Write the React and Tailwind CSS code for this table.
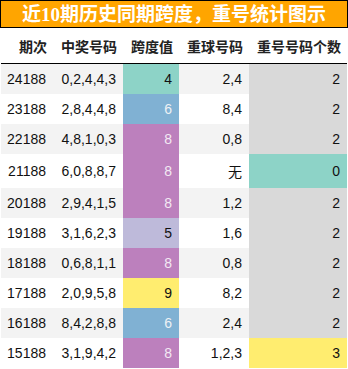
import React from 'react';

const C = {
  teal: 'bg-[#8dd3c7] text-[#111]',
  blue: 'bg-[#80b1d3] text-[#eef2f5]',
  purple: 'bg-[#bc80bd] text-[#f3e9f3]',
  lav: 'bg-[#bebada] text-[#111]',
  yellow: 'bg-[#ffed6f] text-[#111]',
  gray: 'bg-[#d9d9d9] text-[#111]',
};

const rows = [
  ['24188', '0,2,4,4,3', '4', 'teal', '2,4', '2', 'gray'],
  ['23188', '2,8,4,4,8', '6', 'blue', '8,4', '2', 'gray'],
  ['22188', '4,8,1,0,3', '8', 'purple', '0,8', '2', 'gray'],
  ['21188', '6,0,8,8,7', '8', 'purple', '无', '0', 'teal'],
  ['20188', '2,9,4,1,5', '8', 'purple', '1,2', '2', 'gray'],
  ['19188', '3,1,6,2,3', '5', 'lav', '1,6', '2', 'gray'],
  ['18188', '0,6,8,1,1', '8', 'purple', '0,8', '2', 'gray'],
  ['17188', '2,0,9,5,8', '9', 'yellow', '8,2', '2', 'gray'],
  ['16188', '8,4,2,8,8', '6', 'blue', '2,4', '2', 'gray'],
  ['15188', '3,1,9,4,2', '8', 'purple', '1,2,3', '3', 'yellow'],
];

const headers = ['期次', '中奖号码', '跨度值', '重球号码', '重号号码个数'];
const widths = ['w-[52px]', 'w-[70px]', 'w-[56px]', 'w-[70px]', 'w-[98px]'];

export default function App() {
  return (
    <div className="w-[348px] bg-white font-['Liberation_Sans','Noto_Sans_CJK_SC',sans-serif] text-[14px] leading-[normal] text-[#111]">
      {/* title */}
      <div className="h-[28px] border border-black bg-[#ffa500] flex items-center justify-center font-['Liberation_Serif','Noto_Sans_CJK_SC',serif] text-[19px] font-bold text-white leading-none">
        近10期历史同期跨度，重号统计图示
      </div>

      <table className="mx-px border-collapse table-fixed">
        <thead>
          <tr className="h-[35px] border-b-[1.5px] border-black">
            {headers.map((h, i) => (
              <th key={h} className={`${widths[i]} pr-[6px] pt-[1px] text-right align-middle font-bold text-[#222]`}>
                {h}
              </th>
            ))}
          </tr>
        </thead>
        <tbody>
          {rows.map((r, i) => (
            <tr key={r[0]} className={i % 2 === 0 ? 'bg-[#f3f3f3]' : 'bg-white'}>
              <td className="py-[7px] pr-[7px] text-right">{r[0]}</td>
              <td className="py-[7px] pr-[7px] text-right">{r[1]}</td>
              <td className={`py-[7px] pr-[7px] text-right ${C[r[3]]}`}>{r[2]}</td>
              <td className="py-[7px] pr-[7px] text-right">{r[4]}</td>
              <td className={`py-[7px] pr-[7px] text-right ${C[r[6]]}`}>{r[5]}</td>
            </tr>
          ))}
        </tbody>
      </table>
    </div>
  );
}
